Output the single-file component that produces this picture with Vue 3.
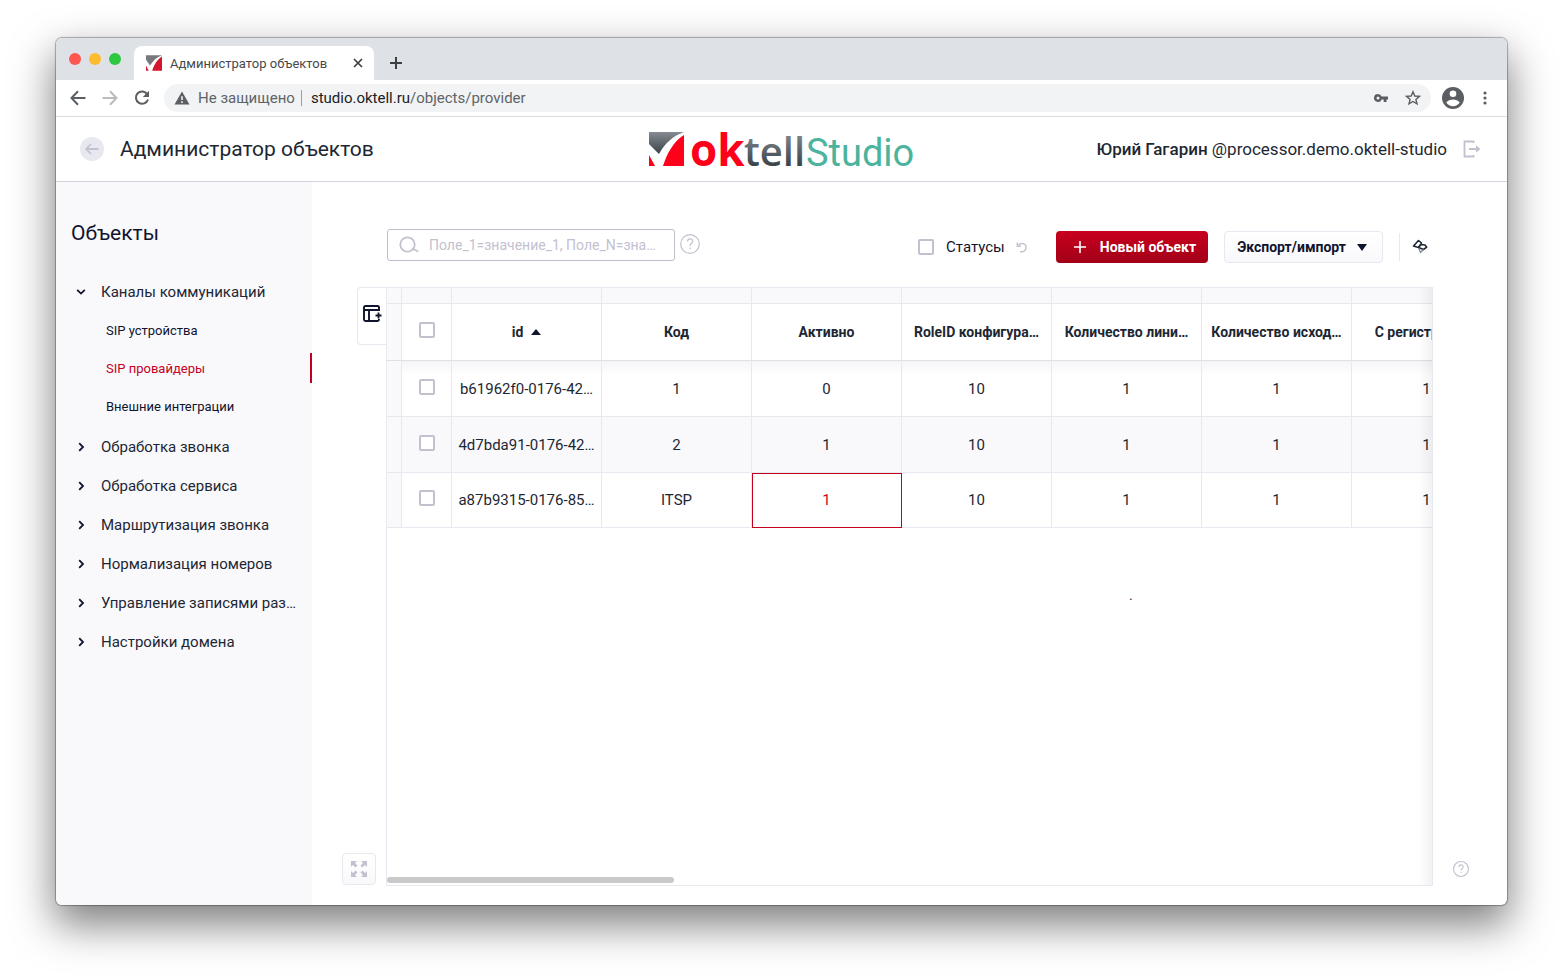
<script setup>
import { ref } from 'vue'

const query = ref('')
const showStatuses = ref(false)

const channels = [
  { label: 'SIP устройства', active: false },
  { label: 'SIP провайдеры', active: true },
  { label: 'Внешние интеграции', active: false }
]

const sections = [
  'Обработка звонка',
  'Обработка сервиса',
  'Маршрутизация звонка',
  'Нормализация номеров',
  'Управление записями раз…',
  'Настройки домена'
]

const columns = [
  { label: 'id', sorted: true },
  { label: 'Код' },
  { label: 'Активно' },
  { label: 'RoleID конфигура…' },
  { label: 'Количество лини…' },
  { label: 'Количество исход…' },
  { label: 'С регистрацией' }
]

const rows = [
  ['b61962f0-0176-42…', '1', '0', '10', '1', '1', '1'],
  ['4d7bda91-0176-42…', '2', '1', '10', '1', '1', '1'],
  ['a87b9315-0176-85…', 'ITSP', '1', '10', '1', '1', '1']
]

const isSelected = (r, c) => r === 2 && c === 2
</script>

<template>
  <div class="desktop">
    <div class="window">
      <div class="tabs">
        <div class="lights"><i class="red"></i><i class="amber"></i><i class="green"></i></div>
        <div class="tab">
          <svg class="favicon" width="16" height="16" viewBox="0 0 36 35" aria-hidden="true">
            <path d="M0 0H36C24 5 16 12 9 23L0 10Z" fill="#77797c" />
            <path d="M0 23L6 35H0ZM36 3V35H14C18 22 25 10 36 3Z" fill="#d5142d" />
          </svg>
          <span class="tab-title">Администратор объектов</span>
          <button class="plain" aria-label="Закрыть вкладку">
            <svg width="10" height="10" viewBox="0 0 10 10"><path d="M1 1L9 9M9 1L1 9" stroke="#3c4043" stroke-width="1.7" /></svg>
          </button>
        </div>
        <button class="plain new-tab" aria-label="Новая вкладка">
          <svg width="12" height="12" viewBox="0 0 12 12"><path d="M6 0V12M0 6H12" stroke="#3c4043" stroke-width="2" /></svg>
        </button>
      </div>

      <div class="browser-bar">
        <button class="plain" aria-label="Назад">
          <svg width="16" height="16" viewBox="0 0 16 16"><path d="M15.500 8H2M8 1.300L1.500 8L8 14.700" fill="none" stroke="#5b5f63" stroke-width="2" /></svg>
        </button>
        <button class="plain" aria-label="Вперёд">
          <svg width="16" height="16" viewBox="0 0 16 16"><path d="M.5 8H14M8 1.300L14.500 8L8 14.700" fill="none" stroke="#b9bbbd" stroke-width="2" /></svg>
        </button>
        <button class="plain" aria-label="Обновить">
          <svg width="16" height="16" viewBox="0 0 16 16"><path d="M13.300 4.200A6.200 6.200 0 1 0 14 9.500" fill="none" stroke="#5b5f63" stroke-width="2" /><path d="M15 .8V7H8.800Z" fill="#5b5f63" /></svg>
        </button>
        <div class="address">
          <svg width="16" height="14" viewBox="0 0 16 14" aria-hidden="true"><path d="M8 .5L15.500 13.500H.5Z" fill="#5b5f63" /><path d="M8 5.200V9M8 10.200V12" stroke="#f1f3f4" stroke-width="1.600" /></svg>
          <span class="insecure">Не защищено</span>
          <span class="bar"></span>
          <span class="url"><b>studio.oktell.ru</b>/objects/provider</span>
          <button class="plain key" aria-label="Пароли">
            <svg width="14" height="10" viewBox="0 0 14 10"><path fill-rule="evenodd" d="M4 1A4 4 0 0 1 7.700 3.500H14V6.500H12.500V9H9.700V6.500H7.700A4 4 0 1 1 4 1ZM4 3.500A1.500 1.500 0 1 0 4 6.500A1.500 1.500 0 1 0 4 3.500Z" fill="#5b5f63" /></svg>
          </button>
          <button class="plain" aria-label="В закладки">
            <svg width="16" height="16" viewBox="0 0 16 16"><path d="M8 1.800L9.800 6L14.400 6.400L10.900 9.400L12 13.900L8 11.500L4 13.900L5.100 9.400L1.600 6.400L6.200 6Z" fill="none" stroke="#5b5f63" stroke-width="1.400" /></svg>
          </button>
        </div>
        <button class="plain" aria-label="Профиль">
          <svg width="22" height="22" viewBox="0 0 22 22"><circle cx="11" cy="11" r="11" fill="#5b5f63" /><circle cx="11" cy="6.700" r="3.300" fill="#fff" /><path d="M4.300 15.500C5.500 13.500 8.500 12.500 11 12.500S16.500 13.500 17.700 15.500A8 8 0 0 1 4.300 15.500Z" fill="#fff" /></svg>
        </button>
        <button class="plain more" aria-label="Меню">
          <svg width="4" height="14" viewBox="0 0 4 14"><g fill="#5b5f63"><circle cx="2" cy="2" r="1.600" /><circle cx="2" cy="7" r="1.600" /><circle cx="2" cy="12" r="1.600" /></g></svg>
        </button>
      </div>

      <header class="header">
        <div class="header-left">
          <button class="plain back" aria-label="Вернуться">
            <svg width="14" height="12" viewBox="0 0 14 12"><path d="M13.500 6H1.500M6 1L1.200 6L6 11" fill="none" stroke="#c3c1cf" stroke-width="1.800" /></svg>
          </button>
          <h1>Администратор объектов</h1>
        </div>
        <svg class="logo" width="266" height="62" viewBox="0 0 266 62" role="img" aria-label="oktell Studio">
          <defs>
            <linearGradient id="steel" x1="0" y1="0" x2="0" y2="1">
              <stop offset="0" stop-color="#858b90" /><stop offset="1" stop-color="#394249" />
            </linearGradient>
            <linearGradient id="steel-text" gradientUnits="userSpaceOnUse" x1="0" y1="14" x2="0" y2="48">
              <stop offset="0" stop-color="#858b90" /><stop offset="1" stop-color="#394249" />
            </linearGradient>
          </defs>
          <path d="M0 14H35C24 18 16 25 10 36L0 26Z" fill="url(#steel)" />
          <path d="M0 37L6 48H0ZM35 17V48H14C18 35 25 23 35 17Z" fill="#fe0019" />
          <text x="41" y="48" class="logo-ok">ok</text>
          <text x="95" y="48" class="logo-tell" fill="url(#steel-text)">tell</text>
          <text x="157" y="48" class="logo-studio">Studio</text>
        </svg>
        <div class="header-right">
          <span class="user"><b>Юрий Гагарин</b> @processor.demo.oktell-studio</span>
          <button class="plain" aria-label="Выйти">
            <svg width="18" height="18" viewBox="0 0 18 18"><path d="M10.500 3V1.500H1.500V16.500H10.500V15M6 9H14" fill="none" stroke="#c3c1cf" stroke-width="1.800" /><path d="M13 5.300L17.500 9L13 12.700Z" fill="#c3c1cf" /></svg>
          </button>
        </div>
      </header>

      <div class="content">
        <nav class="sidebar">
          <h2>Объекты</h2>
          <ul>
            <li>
              <a href="#" class="item">
                <svg class="chev" width="10" height="10" viewBox="0 0 10 10"><path d="M1.200 2.800L5 6.600L8.800 2.800" fill="none" stroke="#10142d" stroke-width="1.800" /></svg>
                <span>Каналы коммуникаций</span>
              </a>
              <ul class="sub">
                <li v-for="c in channels" :key="c.label">
                  <a href="#" :class="{ active: c.active }">{{ c.label }}</a>
                </li>
              </ul>
            </li>
            <li v-for="s in sections" :key="s">
              <a href="#" class="item">
                <svg class="chev" width="10" height="10" viewBox="0 0 10 10"><path d="M3.200 1.200L7 5L3.200 8.800" fill="none" stroke="#10142d" stroke-width="1.800" /></svg>
                <span>{{ s }}</span>
              </a>
            </li>
          </ul>
        </nav>

        <main class="main">
          <div class="toolbar">
            <label class="search">
              <svg width="20" height="18" viewBox="0 0 20 18" aria-hidden="true"><circle cx="8.500" cy="8.500" r="7.200" fill="none" stroke="#c3c1cf" stroke-width="1.800" /><path d="M13 12.500L19.300 15.500" stroke="#c3c1cf" stroke-width="1.800" /></svg>
              <input v-model="query" type="text" aria-label="Поиск" placeholder="Поле_1=значение_1, Поле_N=зна…" />
            </label>
            <button class="plain search-help" aria-label="Справка по поиску">
              <svg width="20" height="20" viewBox="0 0 20 20"><circle cx="10" cy="10" r="9.300" fill="none" stroke="#c3c1cf" stroke-width="1.200" /><path d="M7.500 7.600C7.500 3.900 12.700 4.100 12.700 7.300C12.700 9.300 10.100 9.400 10.100 12M10.100 13.600V15" fill="none" stroke="#c3c1cf" stroke-width="1.300" /></svg>
            </button>
            <div class="actions">
              <label class="statuses"><input v-model="showStatuses" type="checkbox" /> Статусы</label>
              <button class="plain undo" aria-label="Сбросить">
                <svg width="11" height="11" viewBox="0 0 11 11"><path d="M2.500 3.200C4.500 .6 10 1 10 5.500C10 9 7 10.200 4 9.600" fill="none" stroke="#c3c1cf" stroke-width="1.400" /><path d="M1.300 .5V4.200H5" fill="none" stroke="#c3c1cf" stroke-width="1.400" /></svg>
              </button>
              <button class="btn primary">
                <svg width="12" height="12" viewBox="0 0 12 12"><path d="M6 0V12M0 6H12" stroke="#fff" stroke-width="1.600" /></svg>
                Новый объект
              </button>
              <button class="btn light">
                Экспорт/импорт
                <svg width="10" height="7" viewBox="0 0 10 7"><path d="M0 0H10L5 7Z" fill="#10142d" /></svg>
              </button>
              <button class="plain pin" aria-label="Закрепить">
                <svg width="16" height="16" viewBox="0 0 16 16"><path d="M7 8.500L4.800 8L1.500 7L6.500 1.500L9.500 4L6.500 8.500L9 5.500L13 6L14.700 8.200L11.500 10.500L6.500 8.500" fill="none" stroke="#1d2733" stroke-width="1.600" stroke-linejoin="round" /><path d="M6.500 9L8.500 13.500L11.500 10.500" fill="none" stroke="#7d848c" stroke-width="1.200" /></svg>
              </button>
            </div>
          </div>

          <div class="rail-left">
            <button class="columns-btn" aria-label="Настроить колонки">
              <svg width="20" height="17" viewBox="0 0 20 17"><path d="M16 6V2.500Q16 1 14.500 1H2.500Q1 1 1 2.500V14.500Q1 16 2.500 16H14.500Q16 16 16 14.500V14M1 5H16M6 5V16" fill="none" stroke="#10142d" stroke-width="1.900" /><path d="M15.500 7.500V13.500M12.500 10.500H18.500" stroke="#10142d" stroke-width="1.800" /></svg>
            </button>
            <button class="expand-btn" aria-label="Развернуть">
              <svg width="18" height="18" viewBox="0 0 18 18"><path d="M1 1H7L5 3L7.500 5.500L5.500 7.500L3 5L1 7ZM17 1V7L15 5L12.500 7.500L10.500 5.500L13 3L11 1ZM1 17V11L3 13L5.500 10.500L7.500 12.500L5 15L7 17ZM17 17H11L13 15L10.500 12.500L12.500 10.500L15 13L17 11Z" fill="#c3c1cf" /></svg>
            </button>
          </div>

          <section class="panel">
            <div class="scroll">
              <table>
                <colgroup><col class="c-strip" /><col class="c-check" /><col v-for="c in columns" :key="c.label" class="c-data" /></colgroup>
                <thead>
                  <tr class="strip"><td v-for="n in columns.length + 2" :key="n"></td></tr>
                  <tr class="heads">
                    <td class="side"></td>
                    <th><input type="checkbox" aria-label="Выбрать все" /></th>
                    <th v-for="c in columns" :key="c.label" scope="col">
                      {{ c.label }}<svg v-if="c.sorted" class="sort" width="10" height="6" viewBox="0 0 10 6"><path d="M0 6H10L5 0Z" fill="#10142d" /></svg>
                    </th>
                  </tr>
                </thead>
                <tbody>
                  <tr v-for="(r, ri) in rows" :key="r[0]">
                    <td class="side"></td>
                    <td><input type="checkbox" :aria-label="'Выбрать ' + r[0]" /></td>
                    <td v-for="(v, ci) in r" :key="ci" :class="{ selected: isSelected(ri, ci) }">{{ v }}</td>
                  </tr>
                </tbody>
              </table>
              <p class="note">.</p>
            </div>
            <div class="scrollbar"></div>
            <div class="fade"></div>
          </section>

          <div class="rail-right">
            <button class="plain" aria-label="Помощь">
              <svg width="16" height="16" viewBox="0 0 20 20"><circle cx="10" cy="10" r="9.300" fill="none" stroke="#c3c1cf" stroke-width="1.400" /><path d="M7.500 7.600C7.500 3.900 12.700 4.100 12.700 7.300C12.700 9.300 10.100 9.400 10.100 12M10.100 13.600V15" fill="none" stroke="#c3c1cf" stroke-width="1.500" /></svg>
            </button>
          </div>
        </main>
      </div>
    </div>
  </div>
</template>

<style>
body {
  margin: 0;
  background: #fff;
}
</style>

<style scoped>
* {
  box-sizing: border-box;
}
.desktop {
  min-height: 100vh;
  display: flex;
  padding: 38px 56px 74px;
  overflow: hidden;
  font-family: Roboto, "Liberation Sans", sans-serif;
  font-size: 14px;
  color: #1d2733;
}
.window {
  flex: 1;
  min-width: 0;
  display: flex;
  flex-direction: column;
  border-radius: 6px;
  overflow: hidden;
  background: #fff;
  box-shadow: 0 0 1px 1px rgba(0, 0, 0, 0.3), 0 18px 42px 2px rgba(0, 0, 0, 0.5);
}
.plain {
  display: flex;
  align-items: center;
  justify-content: center;
  padding: 0;
  border: 0;
  background: none;
}
svg {
  flex: none;
}
ul, h1, h2, p {
  margin: 0;
  padding: 0;
  list-style: none;
  font-weight: 400;
}
a {
  color: inherit;
  text-decoration: none;
}

.tabs {
  display: flex;
  height: 42px;
  padding-left: 13px;
  background: #dee1e6;
}
.lights {
  display: flex;
  gap: 8px;
  padding-top: 15px;
  margin-right: 13px;
}
.lights i {
  width: 12px;
  height: 12px;
  border-radius: 50%;
}
.red { background: #fe5650; }
.amber { background: #fdbc2e; }
.green { background: #2cc840; }
.tab {
  display: flex;
  align-items: center;
  width: 240px;
  height: 34px;
  margin-top: 8px;
  padding: 0 11px 0 12px;
  border-radius: 8px 8px 0 0;
  background: #fff;
}
.tab-title {
  flex: 1;
  margin-left: 8px;
  font-size: 13px;
  color: #45494d;
}
.new-tab {
  width: 44px;
  padding-top: 8px;
}

.browser-bar {
  display: flex;
  align-items: center;
  gap: 16px;
  height: 37px;
  padding: 0 20px 0 14px;
  border-bottom: 1px solid #dadce0;
}
.address {
  flex: 1;
  display: flex;
  align-items: center;
  height: 28px;
  margin-left: -2px;
  margin-right: -5px;
  padding: 0 10px;
  border-radius: 14px;
  background: #f1f3f4;
  font-size: 15px;
  color: #5f6368;
}
.insecure {
  margin-left: 8px;
}
.bar {
  width: 1px;
  height: 16px;
  margin: 0 9px 0 6px;
  background: #9a9da1;
}
.url {
  flex: 1;
}
.url b {
  font-weight: 400;
  color: #202124;
}
.key {
  margin-right: 17px;
}
.more {
  margin-left: 3px;
}

.header {
  display: grid;
  grid-template-columns: 1fr auto 1fr;
  align-items: center;
  height: 65px;
  padding: 0 26px 0 24px;
  border-bottom: 1px solid #d3d4df;
}
.header-left, .header-right {
  display: flex;
  align-items: center;
  gap: 16px;
}
.header-right {
  justify-content: flex-end;
}
.back {
  width: 24px;
  height: 24px;
  border-radius: 50%;
  background: #e8e8f1;
}
.header h1 {
  font-size: 21px;
}
.user {
  font-size: 17px;
}
.user b {
  font-weight: 500;
}
.logo {
  margin-left: 2px;
  overflow: visible;
}
.logo-ok {
  font: 700 44px "Open Sans", sans-serif;
  fill: #fe0019;
}
.logo-tell {
  font: 600 40px "Open Sans", sans-serif;
}
.logo-studio {
  font: 400 38px Roboto, sans-serif;
  fill: #4bb39e;
}

.content {
  flex: 1;
  display: flex;
}
.sidebar {
  flex: 0 0 256px;
  min-width: 0;
  background: #f9f9fc;
}
.sidebar h2 {
  padding: 38px 15px 26px;
  font-size: 21px;
  line-height: 26px;
  color: #10142d;
}
.item {
  display: flex;
  align-items: center;
  height: 39px;
  padding: 0 12px 0 20px;
  font-size: 15px;
}
.item span {
  margin-left: 15px;
  white-space: nowrap;
}
.sub {
  padding-bottom: 2px;
}
.sub li {
  padding: 4px 0;
}
.sub a {
  display: block;
  height: 30px;
  padding-left: 50px;
  font-size: 13px;
  line-height: 31px;
  color: #10142d;
}
.sub a.active {
  border-right: 2px solid #c5001e;
  color: #c5001e;
}

.main {
  flex: 1;
  min-width: 0;
  display: grid;
  grid-template-columns: 74px minmax(0, 1fr) 74px;
  grid-template-rows: 105px 1fr;
  padding-bottom: 19px;
}
.toolbar {
  grid-column: 2;
  display: flex;
  align-items: center;
  padding: 25px 5px 0 1px;
}
.search {
  display: flex;
  align-items: center;
  gap: 10px;
  width: 288px;
  height: 32px;
  margin-bottom: 4px;
  padding: 0 16px 0 11px;
  border: 1px solid #bebdca;
  border-radius: 3px;
}
.search input {
  flex: 1;
  min-width: 0;
  padding: 0;
  border: 0;
  outline: 0;
  background: none;
  font: inherit;
  color: inherit;
  text-overflow: ellipsis;
}
.search input::placeholder {
  color: #c3c1cf;
}
.search-help {
  margin: 0 0 6px 5px;
}
.actions {
  flex: 1;
  display: flex;
  align-items: center;
  justify-content: flex-end;
}
input[type="checkbox"] {
  appearance: none;
  width: 16px;
  height: 16px;
  margin: 0;
  border: 2px solid #c3c1cf;
  border-radius: 2px;
  background: #fff;
  vertical-align: middle;
}
.statuses {
  display: flex;
  align-items: center;
  gap: 12px;
  font-size: 15px;
  color: #10142d;
}
.undo {
  margin: 0 29px 0 11px;
}
.btn {
  display: flex;
  align-items: center;
  height: 32px;
  border-radius: 4px;
  font: 700 14px Roboto, sans-serif;
  white-space: nowrap;
}
.primary {
  gap: 14px;
  padding: 0 12px 0 18px;
  border: 0;
  background: linear-gradient(#c8001e, #a30018);
  color: #fff;
}
.light {
  gap: 11px;
  margin-left: 16px;
  padding: 0 15px 0 12px;
  border: 1px solid #e8e8f1;
  background: linear-gradient(#fff, #f9f9fc);
  color: #10142d;
}
.pin {
  height: 28px;
  margin-left: 16px;
  padding-left: 12px;
  border-left: 1px solid #e8e8f1;
}

.rail-left {
  grid-column: 1;
  display: flex;
  flex-direction: column;
  justify-content: space-between;
}
.columns-btn {
  align-self: flex-end;
  display: flex;
  align-items: center;
  width: 29px;
  height: 58px;
  padding: 0 0 5px 5px;
  border: 1px solid #e8e8f1;
  border-right: 0;
  border-radius: 4px 0 0 4px;
  background: #fff;
}
.expand-btn {
  display: flex;
  align-items: center;
  justify-content: center;
  width: 34px;
  height: 32px;
  margin-left: 30px;
  margin-bottom: 1px;
  padding: 0;
  border: 1px solid #e8e8f1;
  border-radius: 4px;
  background: linear-gradient(#fff, #f9f9fc);
}
.rail-right {
  display: flex;
  align-items: flex-end;
  justify-content: center;
  padding: 0 18px 9px 0;
}

.panel {
  position: relative;
  display: flex;
  flex-direction: column;
  border: 1px solid #e8e8f1;
}
.scroll {
  flex: 1;
  overflow: hidden;
}
.scrollbar {
  width: 287px;
  height: 6px;
  margin-bottom: 2px;
  border-radius: 3px;
  background: #c9c9c9;
}
.fade {
  position: absolute;
  top: 0;
  right: 0;
  bottom: 0;
  width: 14px;
  background: linear-gradient(to right, rgba(0, 0, 0, 0), rgba(0, 0, 0, 0.05));
}
table {
  width: 1115px;
  table-layout: fixed;
  border-collapse: separate;
  border-spacing: 0;
  text-align: center;
}
.c-strip { width: 15px; }
.c-check { width: 50px; }
.c-data { width: 150px; }
th, td {
  height: 56px;
  padding: 0 6px;
  border-right: 1px solid #e8e8f1;
  border-bottom: 1px solid #e8e8f1;
  white-space: nowrap;
}
th {
  font-weight: 700;
}
.strip td {
  height: 16px;
  background: #f9f9fc;
}
.heads th, .heads td {
  height: 57px;
  border-bottom-color: #dfdfe6;
}
tbody td {
  font-size: 15px;
}
tbody tr:nth-child(1) td {
  background: linear-gradient(#f5f5f7, #fff 14px);
}
tbody tr:nth-child(2) td {
  background: #f9f9fc;
}
tbody tr:nth-child(3) td {
  height: 55px;
}
th input[type="checkbox"], td input[type="checkbox"] {
  margin-bottom: 4px;
}
tr .side {
  padding: 0;
  background: #f9f9fc !important;
}
tbody .selected {
  outline: 1px solid #c5001e;
  outline-offset: -1px;
  color: #d0021b;
}
.sort {
  margin: 0 0 2px 8px;
}
.note {
  padding: 59px 0 0 71%;
}
</style>
